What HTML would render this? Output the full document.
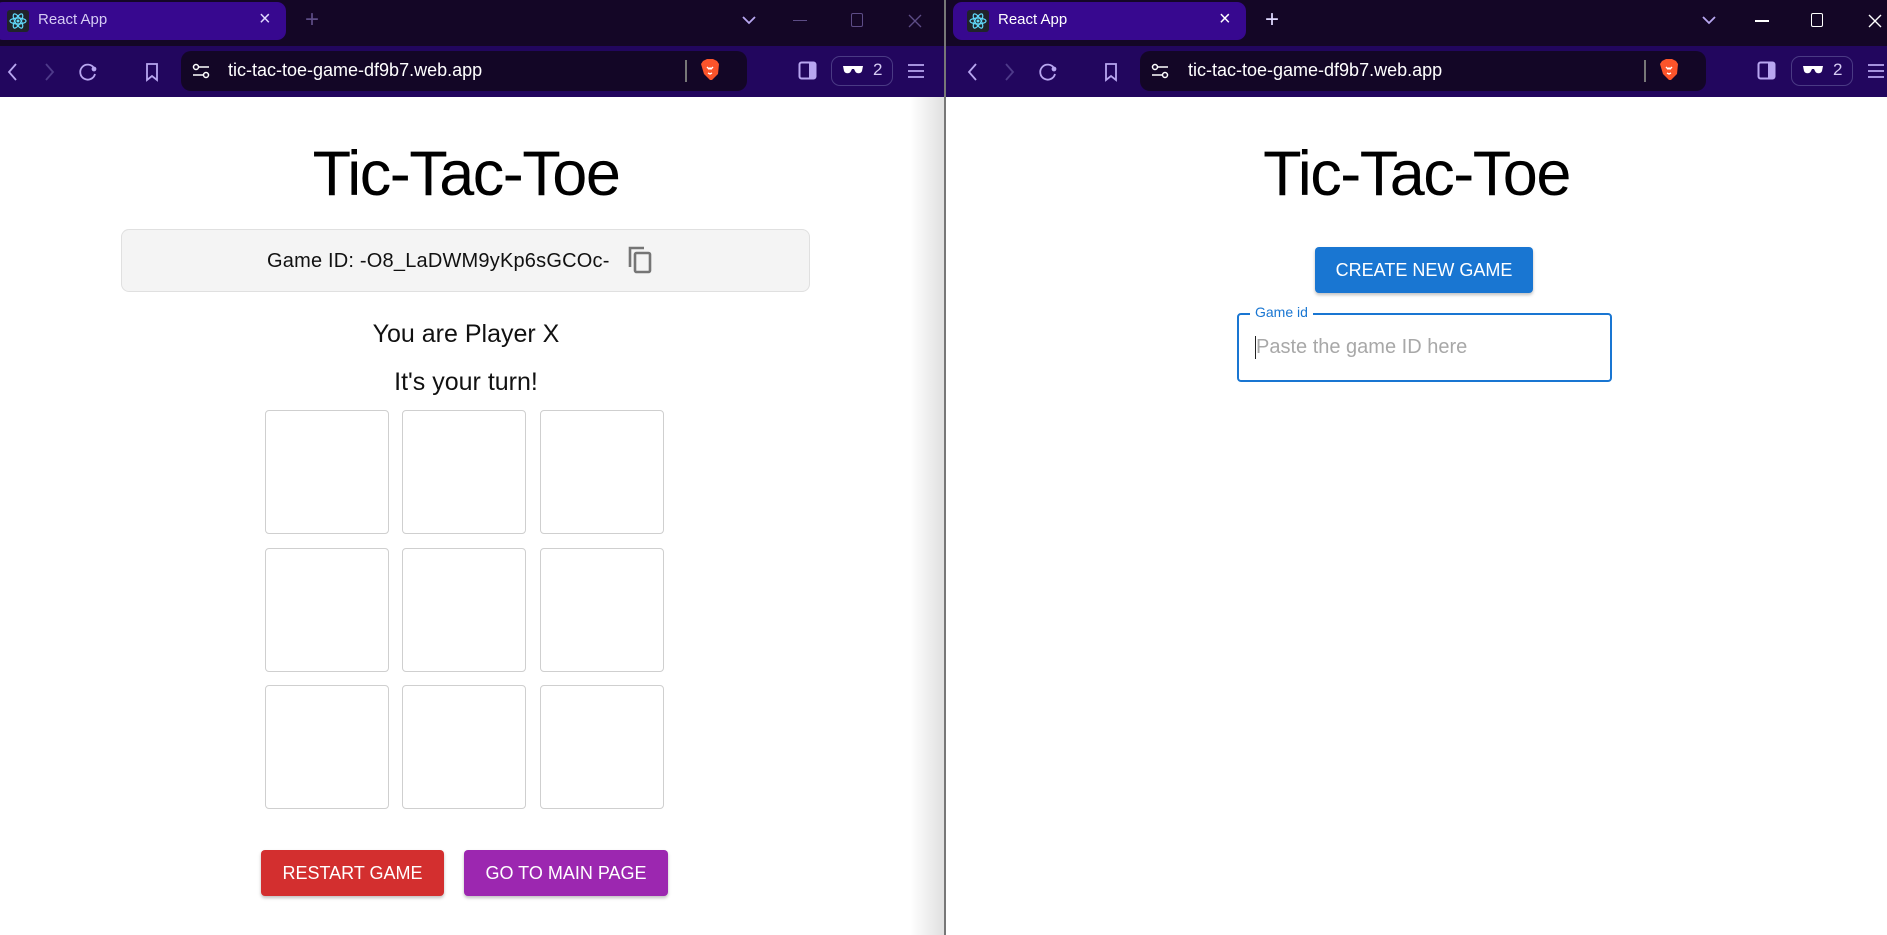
<!DOCTYPE html>
<html><head><meta charset="utf-8"><style>
*{margin:0;padding:0;box-sizing:border-box}
body{width:1887px;height:935px;position:relative;overflow:hidden;background:#fff;font-family:"Liberation Sans",Arial,sans-serif}
.a{position:absolute}
.tabbar{top:0;height:46px;background:#140626}
.toolbar{top:46px;height:51px;background:#22065e}
.tab{top:2px;height:38px;background:#37088f;border-radius:9px}
.tabt{font-size:15px;color:#d6ccf4;top:11px}
.url{top:51px;height:40px;background:#130626;border-radius:10px}
.urlt{font-size:18px;color:#fff;top:60px}
.ico{stroke:#b8a6f0;fill:none;stroke-width:1.8}
.cell{width:124px;height:124px;border:1px solid #cfcfcf;border-radius:4px}
.btn{color:#fff;font-size:18px;border-radius:4px;box-shadow:0 2px 3px rgba(0,0,0,.25);display:flex;align-items:center;justify-content:center}
.title{font-size:63px;letter-spacing:-1.5px;top:138px;text-align:center}
</style></head><body>
<!-- LEFT WINDOW -->
<div class="a tabbar" style="left:0;width:944px"></div>
<div class="a toolbar" style="left:0;width:944px"></div>
<div class="a tab" style="left:-6px;width:292px"></div>
<svg class="a" style="left:7px;top:10px" width="22" height="22" viewBox="0 0 22 22"><rect width="22" height="22" rx="3" fill="#20232a"/><g stroke="#61dafb" fill="none" stroke-width="1.2"><ellipse cx="11" cy="11" rx="8" ry="3"/><ellipse cx="11" cy="11" rx="8" ry="3" transform="rotate(60 11 11)"/><ellipse cx="11" cy="11" rx="8" ry="3" transform="rotate(120 11 11)"/></g><circle cx="11" cy="11" r="1.5" fill="#61dafb"/></svg>
<div class="a tabt" style="left:38px">React App</div>
<div class="a" style="left:259px;top:8px;color:#e0d8ff;font-size:20px">×</div>
<div class="a" style="left:305px;top:6px;color:#5d4c86;font-size:24px">+</div>
<svg class="a" style="left:740px;top:14px" width="18" height="12"><path d="M3 3l6 6 6-6" stroke="#b8a6f0" stroke-width="1.8" fill="none"/></svg>
<div class="a" style="left:793px;top:20px;width:14px;height:1px;background:#5d4c86"></div>
<div class="a" style="left:851px;top:13px;width:12px;height:14px;border:1px solid #5d4c86;border-radius:2px"></div>
<svg class="a" style="left:907px;top:13px" width="16" height="16"><path d="M2 2l12 12M14 2L2 14" stroke="#5d4c86" stroke-width="1.3"/></svg>
<svg class="a ico" style="left:5px;top:62px" width="16" height="20"><path d="M11 2L4 10l7 8"/></svg>
<svg class="a" style="left:42px;top:62px" width="16" height="20"><path d="M4 2l7 8-7 8" stroke="#4e3a8a" stroke-width="1.8" fill="none"/></svg>
<svg class="a ico" style="left:77px;top:61px" width="22" height="22"><path d="M17 7A7.5 7.5 0 1 0 18 13"/><circle cx="17" cy="8" r="1.5" fill="#b8a6f0"/></svg>
<svg class="a ico" style="left:143px;top:61px" width="18" height="22"><path d="M4 3h10v16l-5-4-5 4z"/></svg>
<div class="a url" style="left:181px;width:566px"></div>
<svg class="a" style="left:191px;top:62px" width="20" height="18" stroke="#fff" fill="none" stroke-width="1.5"><circle cx="5" cy="5" r="2.5"/><path d="M8 5h10M2 13h10"/><circle cx="15" cy="13" r="2.5"/></svg>
<div class="a urlt" style="left:228px">tic-tac-toe-game-df9b7.web.app</div>
<div class="a" style="left:685px;top:60px;width:2px;height:22px;background:#777"></div>
<svg class="a" style="left:700px;top:58px" width="20" height="24"><path d="M3 3l4-2h6l4 2 2 3-1 10-6 6h-2l-6-6L1 6z" fill="#fb542b"/><path d="M7 9l2 2 1-1 1 1 2-2M8 15l2 1 2-1" stroke="#fff" stroke-width="1.4" fill="none"/></svg>
<svg class="a" style="left:798px;top:61px" width="20" height="20"><rect x="1.5" y="1.5" width="16" height="16" rx="2" stroke="#b8a6f0" stroke-width="2" fill="none"/><rect x="11" y="2" width="6" height="15" fill="#b8a6f0"/></svg>
<div class="a" style="left:831px;top:56px;width:62px;height:30px;border:1px solid #4a3a84;border-radius:9px"></div>
<svg class="a" style="left:842px;top:63px" width="22" height="14"><path d="M1 3h20l-1 5c-1 3-6 3-7 0l-1-2h-2l-1 2c-1 3-6 3-7 0z" fill="#fff"/></svg>
<div class="a" style="left:873px;top:60px;font-size:17px;color:#d6ccf4">2</div>
<svg class="a" style="left:906px;top:62px" width="20" height="18" stroke="#b8a6f0" stroke-width="1.8"><path d="M2 3h16M2 9h16M2 15h16"/></svg>
<div class="a" style="left:910px;top:97px;width:34px;height:838px;background:linear-gradient(90deg,rgba(0,0,0,0),rgba(0,0,0,.12))"></div>
<div class="a" style="left:944px;top:0;width:2px;height:935px;background:#777"></div>

<div class="a title" style="left:0;width:932px">Tic-Tac-Toe</div>
<div class="a" style="left:121px;top:229px;width:689px;height:63px;background:#f4f4f4;border:1px solid #e0e0e0;border-radius:8px"></div>
<div class="a" style="left:267px;top:250px;font-size:20px;color:#111;letter-spacing:0.2px">Game ID: -O8_LaDWM9yKp6sGCOc-</div>
<svg class="a" style="left:626px;top:245px" width="28" height="30" fill="none" stroke="#757575" stroke-width="2.6"><path d="M4 22V3h14"/><rect x="9" y="8" width="15" height="19" rx="1.5"/></svg>
<div class="a" style="left:0;width:932px;text-align:center;top:320px;font-size:25px;color:#111">You are Player X</div>
<div class="a" style="left:0;width:932px;text-align:center;top:368px;font-size:25px;color:#111">It's your turn!</div>
<div class="a cell" style="left:265px;top:410px"></div><div class="a cell" style="left:402px;top:410px"></div><div class="a cell" style="left:540px;top:410px"></div>
<div class="a cell" style="left:265px;top:548px"></div><div class="a cell" style="left:402px;top:548px"></div><div class="a cell" style="left:540px;top:548px"></div>
<div class="a cell" style="left:265px;top:685px"></div><div class="a cell" style="left:402px;top:685px"></div><div class="a cell" style="left:540px;top:685px"></div>
<div class="a btn" style="left:261px;top:850px;width:183px;height:46px;background:#d32f2f">RESTART GAME</div>
<div class="a btn" style="left:464px;top:850px;width:204px;height:46px;background:#9c27b0">GO TO MAIN PAGE</div>

<!-- RIGHT WINDOW -->
<div class="a tabbar" style="left:946px;width:941px"></div>
<div class="a toolbar" style="left:946px;width:941px"></div>
<div class="a tab" style="left:953px;width:293px"></div>
<svg class="a" style="left:967px;top:10px" width="22" height="22" viewBox="0 0 22 22"><rect width="22" height="22" rx="3" fill="#20232a"/><g stroke="#61dafb" fill="none" stroke-width="1.2"><ellipse cx="11" cy="11" rx="8" ry="3"/><ellipse cx="11" cy="11" rx="8" ry="3" transform="rotate(60 11 11)"/><ellipse cx="11" cy="11" rx="8" ry="3" transform="rotate(120 11 11)"/></g><circle cx="11" cy="11" r="1.5" fill="#61dafb"/></svg>
<div class="a tabt" style="left:998px;color:#fff">React App</div>
<div class="a" style="left:1219px;top:8px;color:#fff;font-size:20px">×</div>
<div class="a" style="left:1265px;top:6px;color:#e0d8ff;font-size:24px">+</div>
<svg class="a" style="left:1700px;top:14px" width="18" height="12"><path d="M3 3l6 6 6-6" stroke="#b8a6f0" stroke-width="1.8" fill="none"/></svg>
<div class="a" style="left:1755px;top:20px;width:14px;height:1.5px;background:#fff"></div>
<div class="a" style="left:1811px;top:13px;width:12px;height:14px;border:1.5px solid #fff;border-radius:2px"></div>
<svg class="a" style="left:1867px;top:13px" width="16" height="16"><path d="M2 2l12 12M14 2L2 14" stroke="#fff" stroke-width="1.4"/></svg>
<svg class="a ico" style="left:965px;top:62px" width="16" height="20"><path d="M11 2L4 10l7 8"/></svg>
<svg class="a" style="left:1002px;top:62px" width="16" height="20"><path d="M4 2l7 8-7 8" stroke="#4e3a8a" stroke-width="1.8" fill="none"/></svg>
<svg class="a ico" style="left:1037px;top:61px" width="22" height="22"><path d="M17 7A7.5 7.5 0 1 0 18 13"/><circle cx="17" cy="8" r="1.5" fill="#b8a6f0"/></svg>
<svg class="a ico" style="left:1102px;top:61px" width="18" height="22"><path d="M4 3h10v16l-5-4-5 4z"/></svg>
<div class="a url" style="left:1140px;width:566px"></div>
<svg class="a" style="left:1150px;top:62px" width="20" height="18" stroke="#fff" fill="none" stroke-width="1.5"><circle cx="5" cy="5" r="2.5"/><path d="M8 5h10M2 13h10"/><circle cx="15" cy="13" r="2.5"/></svg>
<div class="a urlt" style="left:1188px">tic-tac-toe-game-df9b7.web.app</div>
<div class="a" style="left:1644px;top:60px;width:2px;height:22px;background:#777"></div>
<svg class="a" style="left:1659px;top:58px" width="20" height="24"><path d="M3 3l4-2h6l4 2 2 3-1 10-6 6h-2l-6-6L1 6z" fill="#fb542b"/><path d="M7 9l2 2 1-1 1 1 2-2M8 15l2 1 2-1" stroke="#fff" stroke-width="1.4" fill="none"/></svg>
<svg class="a" style="left:1757px;top:61px" width="20" height="20"><rect x="1.5" y="1.5" width="16" height="16" rx="2" stroke="#b8a6f0" stroke-width="2" fill="none"/><rect x="11" y="2" width="6" height="15" fill="#b8a6f0"/></svg>
<div class="a" style="left:1791px;top:56px;width:62px;height:30px;border:1px solid #4a3a84;border-radius:9px"></div>
<svg class="a" style="left:1802px;top:63px" width="22" height="14"><path d="M1 3h20l-1 5c-1 3-6 3-7 0l-1-2h-2l-1 2c-1 3-6 3-7 0z" fill="#fff"/></svg>
<div class="a" style="left:1833px;top:60px;font-size:17px;color:#d6ccf4">2</div>
<svg class="a" style="left:1866px;top:62px" width="20" height="18" stroke="#b8a6f0" stroke-width="1.8"><path d="M2 3h16M2 9h16M2 15h16"/></svg>

<div class="a title" style="left:946px;width:941px">Tic-Tac-Toe</div>
<div class="a btn" style="left:1315px;top:247px;width:218px;height:46px;background:#1976d2">CREATE NEW GAME</div>
<div class="a" style="left:1237px;top:313px;width:375px;height:69px;border:2px solid #1976d2;border-radius:4px"></div>
<div class="a" style="left:1250px;top:304px;padding:0 5px;background:#fff;font-size:14px;color:#1976d2">Game id</div>
<div class="a" style="left:1255px;top:336px;width:1px;height:23px;background:#222"></div>
<div class="a" style="left:1256px;top:336px;font-size:20px;color:#a8a8a8">Paste the game ID here</div>
</body></html>
